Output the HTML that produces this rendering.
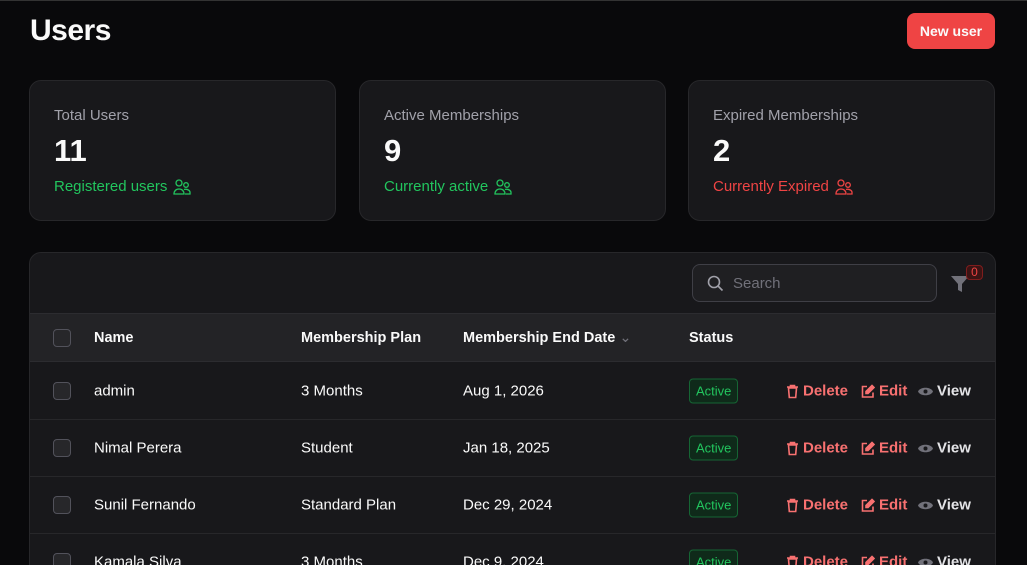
<!DOCTYPE html><html><head><style>
*{box-sizing:border-box;margin:0;padding:0}
html,body{width:1027px;height:565px;overflow:hidden}
body{background:#09090b;font-family:"Liberation Sans",sans-serif;color:#fafafa;position:relative;border-top:1px solid #333}
.abs{position:absolute}
h1{position:absolute;left:30px;top:13px;font-size:30px;font-weight:700;letter-spacing:-0.5px}
.btn{position:absolute;left:907px;top:12px;width:88px;height:36px;background:#ef4444;border-radius:8px;font-size:14px;font-weight:700;text-align:center;line-height:36px}
.card{position:absolute;top:79px;width:307px;height:141px;background:#18181b;border:1px solid #27272a;border-radius:12px;padding:0 24px}
.card .t{position:absolute;top:26px;left:24px;font-size:15px;color:#a1a1aa}
.card .n{position:absolute;top:52px;left:24px;font-size:31px;font-weight:700}
.card .s{position:absolute;top:97px;left:24px;font-size:15px;display:flex;align-items:center;gap:6px}
.tbl{position:absolute;left:29px;top:251px;width:967px;height:330px;background:#18181b;border:1px solid #27272a;border-radius:12px;overflow:hidden}
.search{position:absolute;left:662px;top:11px;width:245px;height:38px;border:1px solid #3f3f46;border-radius:8px;background:#1f1f22}
.search span{position:absolute;left:40px;top:10px;font-size:15px;color:#71717a}
.hdr{position:absolute;left:0;top:60px;width:100%;height:49px;background:#232326;border-top:1px solid #2c2c30;border-bottom:1px solid #2c2c30;font-size:14.5px;font-weight:700}
.row{position:absolute;left:0;width:100%;height:57px;border-bottom:1px solid #27272a;font-size:15px}
.c{position:absolute;top:50%;transform:translateY(-50%);white-space:nowrap}
.cb{position:absolute;left:23px;top:50%;margin-top:-9px;width:18px;height:18px;border:1px solid #52525b;border-radius:4px;background:#27272a}
.badge{border:1px solid #166534;background:#0f2a1a;color:#22c55e;font-size:13px;border-radius:4px;padding:4px 6px}
.act{font-weight:700;display:flex;align-items:center;gap:4px;font-size:15px}
</style></head><body>
<h1>Users</h1><div class="btn">New user</div>
<div class="card" style="left:29px"><div class="t">Total Users</div><div class="n">11</div><div class="s" style="color:#22c55e">Registered users <svg width="18" height="16" viewBox="0 0 18 16" fill="none" stroke="#22c55e" stroke-width="1.3"><circle cx="6" cy="4" r="3"/><path d="M1 15c0-3 2-5 5-5s5 2 5 5z"/><circle cx="13" cy="6" r="2.3"/><path d="M11 10.5c1-.5 5-.5 6 2.5v2h-5"/></svg></div></div>
<div class="card" style="left:359px"><div class="t">Active Memberships</div><div class="n">9</div><div class="s" style="color:#22c55e">Currently active <svg width="18" height="16" viewBox="0 0 18 16" fill="none" stroke="#22c55e" stroke-width="1.3"><circle cx="6" cy="4" r="3"/><path d="M1 15c0-3 2-5 5-5s5 2 5 5z"/><circle cx="13" cy="6" r="2.3"/><path d="M11 10.5c1-.5 5-.5 6 2.5v2h-5"/></svg></div></div>
<div class="card" style="left:688px"><div class="t">Expired Memberships</div><div class="n">2</div><div class="s" style="color:#ef4444">Currently Expired <svg width="18" height="16" viewBox="0 0 18 16" fill="none" stroke="#ef4444" stroke-width="1.3"><circle cx="6" cy="4" r="3"/><path d="M1 15c0-3 2-5 5-5s5 2 5 5z"/><circle cx="13" cy="6" r="2.3"/><path d="M11 10.5c1-.5 5-.5 6 2.5v2h-5"/></svg></div></div>
<div class="tbl">
<div class="search"><svg class="abs" style="left:14px;top:10px" width="17" height="17" viewBox="0 0 17 17" fill="none" stroke="#a1a1aa" stroke-width="1.6"><circle cx="7" cy="7" r="5.5"/><path d="M11 11l4.5 4.5"/></svg><span>Search</span></div>
<svg class="abs" style="left:921px;top:22px" width="18" height="18" viewBox="0 0 18 18"><path d="M0 1h18l-7 8v8l-4-2v-6z" fill="#71717a"/></svg>
<div class="abs" style="left:936px;top:12px;width:17px;height:15px;border:1px solid #7f1d1d;background:#3b1414;border-radius:4px;color:#ef4444;font-size:12px;text-align:center;line-height:13px">0</div>
<div class="hdr"><div class="cb"></div><div class="c" style="left:64px">Name</div><div class="c" style="left:271px">Membership Plan</div><div class="c" style="left:433px">Membership End Date <span style="color:#71717a;font-weight:400">&#x2304;</span></div><div class="c" style="left:659px">Status</div></div>
<div id="rows"></div>
</div>
<script>
var d=[["admin","3 Months","Aug 1, 2026"],["Nimal Perera","Student","Jan 18, 2025"],["Sunil Fernando","Standard Plan","Dec 29, 2024"],["Kamala Silva","3 Months","Dec 9, 2024"]];
var h="";d.forEach(function(r,i){h+='<div class="row" style="top:'+(110+57*i)+'px"><div class="cb"></div><div class="c" style="left:64px">'+r[0]+'</div><div class="c" style="left:271px">'+r[1]+'</div><div class="c" style="left:433px">'+r[2]+'</div><div class="c" style="left:659px"><span class="badge">Active</span></div>'+
'<div class="c act" style="left:756px;color:#f87171"><svg width="13" height="14" viewBox="0 0 13 14"><path d="M1 2.5h11M4.5 2.5V1h4v1.5M2.5 3.5l.8 9.5h6.4l.8-9.5z" stroke="#f87171" stroke-width="1.6" fill="none"/></svg>Delete</div>'+
'<div class="c act" style="left:831px;color:#f87171"><svg width="14" height="14" viewBox="0 0 14 14" fill="none" stroke="#f87171" stroke-width="1.6"><path d="M6 2H1.5v10.5H12V8"/><path d="M11 1l2 2-6 6H5V7z" fill="#f87171"/></svg>Edit</div>'+
'<div class="c act" style="left:888px;color:#e4e4e7"><svg width="15" height="10" viewBox="0 0 15 10"><path d="M0 5c2-5 13-5 15 0-2 5-13 5-15 0z" fill="#71717a"/><circle cx="7.5" cy="5" r="2" fill="#18181b"/></svg>View</div></div>'});
document.getElementById("rows").innerHTML=h;
</script>
</body></html>
